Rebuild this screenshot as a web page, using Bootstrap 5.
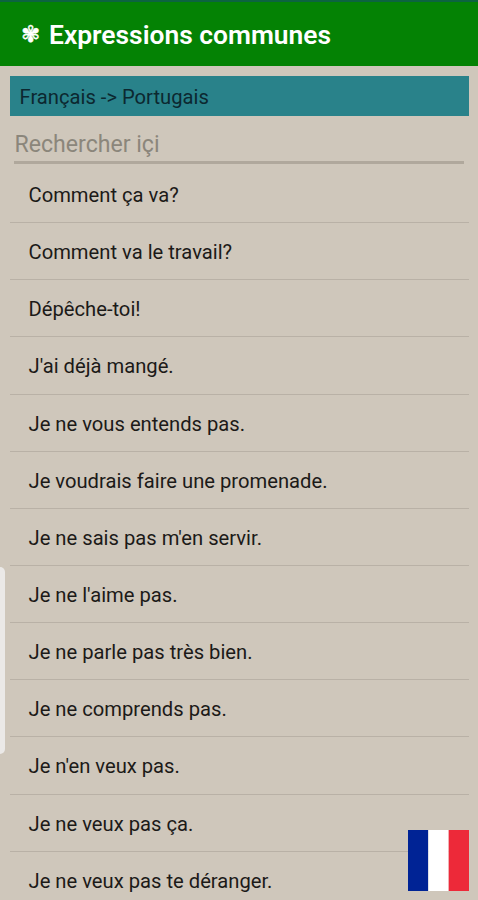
<!DOCTYPE html>
<html lang="fr">
<head>
<meta charset="utf-8">
<meta name="viewport" content="width=device-width, initial-scale=1">
<title>Expressions communes</title>
<link href="https://cdn.jsdelivr.net/npm/bootstrap@5.3.0/dist/css/bootstrap.min.css" rel="stylesheet">
<style>
html, body { height: 100%; overflow: hidden; }
body { background: #cfc7bb; font-family: Roboto, sans-serif; color: #1c1a18; }
.app-bar { height: 66px; background: #048204; border-top: 2px solid #0c6440; padding: 1px 21px 0; }
.app-title { font-size: 26.4px; font-weight: 600; line-height: 1; padding-top: 1px; }
.florette { font-family: "DejaVu Sans", sans-serif; font-size: 23px; font-weight: 700; line-height: 1; width: 28px; -webkit-text-stroke: .4px #fff; }
.direction { height: 40px; margin: 10px 9px 0 10px; padding: 2px 0 0 9.5px; background: #29828a; color: #0c2830; font-size: 20.2px; }
.search { height: 47px; margin: 1px 14px 0; border: 0; border-bottom: 3px solid #b0a89c; border-radius: 0; padding: 11px 0 0 .5px; background: transparent; font-size: 23.1px; line-height: 1; }
.search::placeholder { color: #8b867b; opacity: 1; }
.phrases { margin: 2px 9px 0 10px; }
.phrase { height: 57.15px; padding: 2px 0 0 18.5px; background: transparent; color: inherit; border: 0; border-bottom: 1.5px solid #b9b1a6; font-size: 20.2px; line-height: 1; }
.edge-handle { left: 0; top: 567px; width: 5px; height: 187px; background: #ebe9e7; border-radius: 0 5px 5px 0; }
.flag { left: 408px; top: 830px; width: 61px; height: 61px; }
</style>
</head>
<body>
<header class="app-bar navbar flex-nowrap justify-content-start text-white">
  <span class="florette">✾</span><h1 class="app-title mb-0 text-nowrap">Expressions communes</h1>
</header>
<main>
  <div class="direction d-flex align-items-center"><span>Français -&gt; Portugais</span></div>
  <div class="d-flex"><input class="search form-control shadow-none" type="text" placeholder="Rechercher içi" aria-label="Rechercher"></div>
  <ul class="phrases list-group list-group-flush">
    <li class="phrase list-group-item d-flex align-items-center"><span>Comment ça va?</span></li>
    <li class="phrase list-group-item d-flex align-items-center"><span>Comment va le travail?</span></li>
    <li class="phrase list-group-item d-flex align-items-center"><span>Dépêche-toi!</span></li>
    <li class="phrase list-group-item d-flex align-items-center"><span>J'ai déjà mangé.</span></li>
    <li class="phrase list-group-item d-flex align-items-center"><span>Je ne vous entends pas.</span></li>
    <li class="phrase list-group-item d-flex align-items-center"><span>Je voudrais faire une promenade.</span></li>
    <li class="phrase list-group-item d-flex align-items-center"><span>Je ne sais pas m'en servir.</span></li>
    <li class="phrase list-group-item d-flex align-items-center"><span>Je ne l'aime pas.</span></li>
    <li class="phrase list-group-item d-flex align-items-center"><span>Je ne parle pas très bien.</span></li>
    <li class="phrase list-group-item d-flex align-items-center"><span>Je ne comprends pas.</span></li>
    <li class="phrase list-group-item d-flex align-items-center"><span>Je n'en veux pas.</span></li>
    <li class="phrase list-group-item d-flex align-items-center"><span>Je ne veux pas ça.</span></li>
    <li class="phrase list-group-item d-flex align-items-center"><span>Je ne veux pas te déranger.</span></li>
  </ul>
</main>
<div class="edge-handle position-fixed"></div>
<svg class="flag position-fixed" viewBox="0 0 61 61" role="img" aria-label="Français"><path fill="#002395" d="M0 0h20.3v61H0z"/><path fill="#fff" d="M20.3 0h20.4v61H20.3z"/><path fill="#ed2939" d="M40.7 0H61v61H40.7z"/></svg>
<script src="https://cdn.jsdelivr.net/npm/bootstrap@5.3.0/dist/js/bootstrap.bundle.min.js"></script>
</body>
</html>
